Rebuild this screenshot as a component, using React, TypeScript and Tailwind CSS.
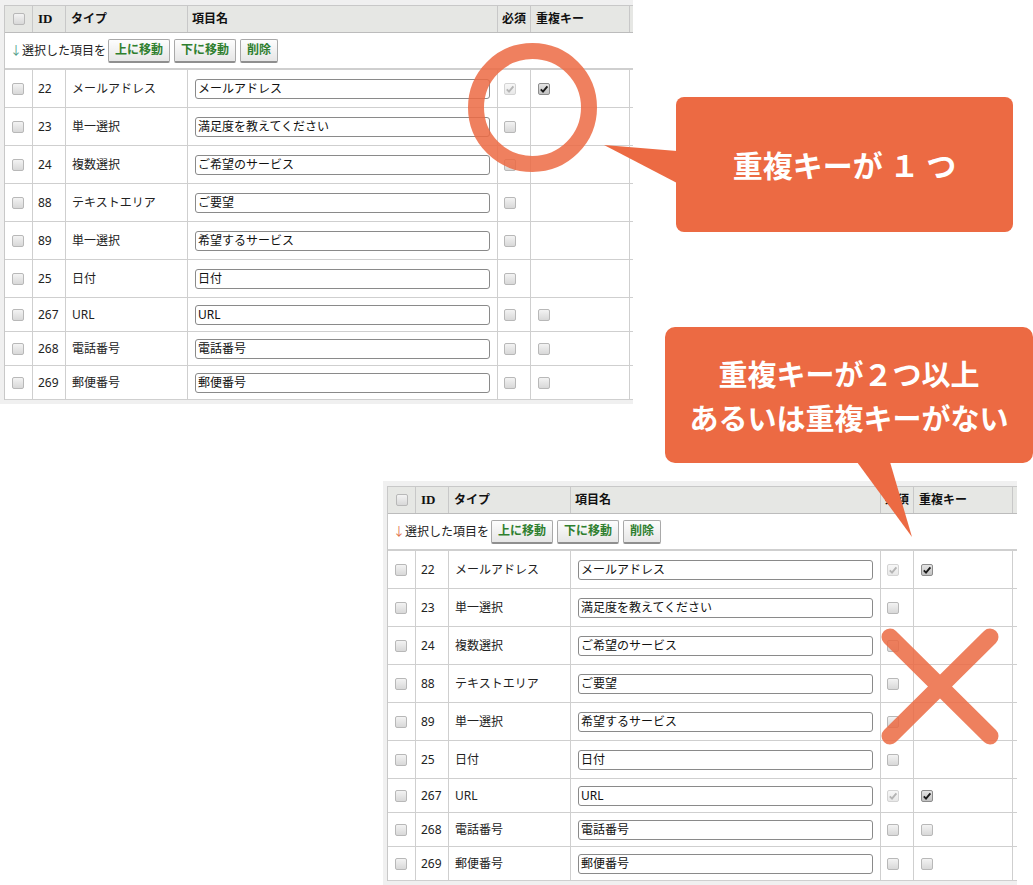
import React from 'react';

type Mark = 'off' | 'on' | 'dis' | null;

type Row = { id: number; type: string; name: string; req: Mark; key: Mark; tall: boolean };

const baseRows: Row[] = [
  { id: 22, type: 'メールアドレス', name: 'メールアドレス', req: 'dis', key: 'on', tall: true },
  { id: 23, type: '単一選択', name: '満足度を教えてください', req: 'off', key: null, tall: true },
  { id: 24, type: '複数選択', name: 'ご希望のサービス', req: 'off', key: null, tall: true },
  { id: 88, type: 'テキストエリア', name: 'ご要望', req: 'off', key: null, tall: true },
  { id: 89, type: '単一選択', name: '希望するサービス', req: 'off', key: null, tall: true },
  { id: 25, type: '日付', name: '日付', req: 'off', key: null, tall: true },
  { id: 267, type: 'URL', name: 'URL', req: 'off', key: 'off', tall: false },
  { id: 268, type: '電話番号', name: '電話番号', req: 'off', key: 'off', tall: false },
  { id: 269, type: '郵便番号', name: '郵便番号', req: 'off', key: 'off', tall: false },
];

const secondRows: Row[] = baseRows.map((r) => (r.id === 267 ? { ...r, req: 'dis', key: 'on' } : r));

const Box: React.FC<{ state: Mark }> = ({ state }) => {
  if (!state) return null;
  if (state === 'off') {
    return <div className="w-[12px] h-[12px] rounded-[2px] border border-[#b8b8b8] bg-gradient-to-b from-[#f3f3f3] to-[#d8d8d8]" />;
  }
  const dis = state === 'dis';
  return (
    <div
      className={`w-[12px] h-[12px] rounded-[2px] border flex items-center justify-center ${
        dis ? 'border-[#d4d4d4] bg-gradient-to-b from-[#f7f7f7] to-[#e8e8e8]' : 'border-[#8c8c8c] bg-gradient-to-b from-[#e4e4e4] to-[#c2c2c2]'
      }`}
    >
      <svg width="10" height="10" viewBox="0 0 10 10">
        <path d="M1.8 5.4 L4 7.6 L8.4 2.4" fill="none" stroke={dis ? '#b4b4b4' : '#1a1a1a'} strokeWidth="1.9" />
      </svg>
    </div>
  );
};

const Btn: React.FC<{ label: string }> = ({ label }) => (
  <button className="h-[24px] px-[6px] rounded-[2px] border border-[#a9a9a9] border-b-2 border-b-[#8f8f8f] bg-gradient-to-b from-[#fdfdfd] to-[#e6e6e6] text-[12px] font-bold text-[#2f7f2f] leading-none">
    {label}
  </button>
);

const FormTable: React.FC<{ rows: Row[]; arrow: string }> = ({ rows, arrow }) => (
  <div className="w-full h-full bg-[#f0f0f0] pt-[5px] pl-[4px] overflow-hidden">
    <div className="w-[640px] border-t border-l border-[#c8c8c8] bg-white text-[12px] text-[#222]">
      {/* header */}
      <div className="flex h-[27px] bg-[#e6e7e4] border-b border-[#bcbcbc] font-bold text-[#111]">
        <div className="w-[28px] shrink-0 border-r border-[#c8c8c8] flex items-center pl-[8px]">
          <Box state="off" />
        </div>
        <div className="w-[33px] shrink-0 border-r border-[#c8c8c8] flex items-center pl-[5px] font-['Liberation_Serif',serif] text-[13px]">ID</div>
        <div className="w-[122px] shrink-0 border-r border-[#c8c8c8] flex items-center pl-[5px]">タイプ</div>
        <div className="w-[310px] shrink-0 border-r border-[#c8c8c8] flex items-center pl-[4px]">項目名</div>
        <div className="w-[33px] shrink-0 border-r border-[#c8c8c8] flex items-center pl-[4px]">必須</div>
        <div className="w-[99px] shrink-0 border-r border-[#c8c8c8] flex items-center pl-[5px]">重複キー</div>
        <div className="flex-1" />
      </div>
      {/* toolbar */}
      <div className="flex items-center h-[37px] border-b-2 border-[#cfcfcf] pl-[5px] gap-[4px]">
        <span className="mr-[-2px]">
          <span style={{ color: arrow }}>↓</span>選択した項目を
        </span>
        <Btn label="上に移動" />
        <Btn label="下に移動" />
        <Btn label="削除" />
      </div>
      {/* rows */}
      {rows.map((r) => (
        <div key={r.id} className={`flex border-b border-[#cfcfcf] ${r.tall ? 'h-[38px]' : 'h-[34px]'}`}>
          <div className="w-[28px] shrink-0 border-r border-[#cfcfcf] flex items-center pl-[7px]">
            <Box state="off" />
          </div>
          <div className="w-[33px] shrink-0 border-r border-[#cfcfcf] flex items-center pl-[5px]">{r.id}</div>
          <div className="w-[122px] shrink-0 border-r border-[#cfcfcf] flex items-center pl-[6px]">{r.type}</div>
          <div className="w-[310px] shrink-0 border-r border-[#cfcfcf] flex items-center pl-[7px]">
            <div className="w-[295px] h-[20px] rounded-[3px] border border-[#8a8a8a] flex items-center pl-[2px] text-[#111]">{r.name}</div>
          </div>
          <div className="w-[33px] shrink-0 border-r border-[#cfcfcf] flex items-center pl-[6px]">
            <Box state={r.req} />
          </div>
          <div className="w-[99px] shrink-0 border-r border-[#cfcfcf] flex items-center pl-[7px]">
            <Box state={r.key} />
          </div>
          <div className="flex-1" />
        </div>
      ))}
    </div>
  </div>
);

export default function App() {
  return (
    <div className="relative w-[1033px] h-[885px] bg-white overflow-hidden font-['Noto_Sans','Noto_Sans_CJK_JP',sans-serif]">
      <div className="absolute left-0 top-0 w-[633px] h-[404px]">
        <FormTable rows={baseRows} arrow="#4f9a86" />
      </div>
      <div className="absolute left-[383px] top-[481px] w-[634px] h-[404px]">
        <FormTable rows={secondRows} arrow="#e2704c" />
      </div>

      {/* drawings */}
      <svg className="absolute inset-0" width="1033" height="885" viewBox="0 0 1033 885">
        <circle cx="532.5" cy="107.5" r="56.5" fill="none" stroke="#ec6a43" strokeOpacity="0.85" strokeWidth="16" />
        <polygon points="604,145 677,151 677,183" fill="#ec6a43" />
        <polygon points="857,462 890,462 912,537" fill="#ec6a43" />
        <g opacity="0.85" stroke="#ec6a43" strokeWidth="17" strokeLinecap="round">
          <line x1="890" y1="637" x2="990" y2="736" />
          <line x1="990" y1="637" x2="890" y2="736" />
        </g>
      </svg>

      <div className="absolute left-[676px] top-[97px] w-[337px] h-[135px] rounded-[8px] bg-[#ec6a43] flex items-center justify-center text-white font-bold text-[30px] font-['Noto_Sans_CJK_JP',sans-serif]">
        重複キーが １ つ
      </div>
      <div className="absolute left-[665px] top-[327px] w-[368px] h-[136px] rounded-[10px] bg-[#ec6a43] flex flex-col items-center justify-center text-white font-bold text-[29px] leading-[44px] font-['Noto_Sans_CJK_JP',sans-serif]">
        <div>重複キーが２つ以上</div>
        <div>あるいは重複キーがない</div>
      </div>
    </div>
  );
}
